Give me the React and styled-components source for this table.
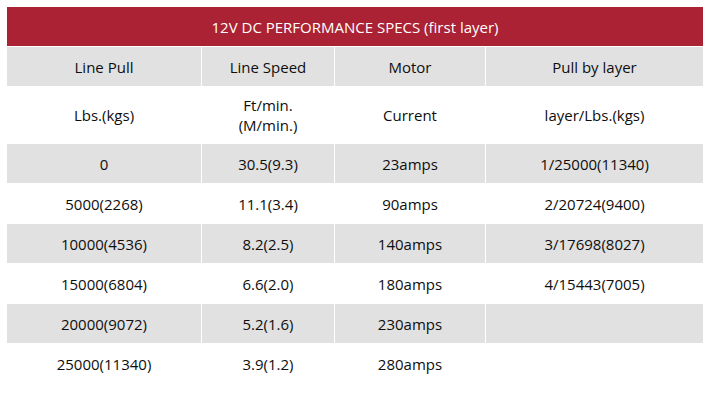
import React from "react";
import styled, { createGlobalStyle } from "styled-components";

const Global = createGlobalStyle`
  html, body { margin: 0; padding: 0; background: #ffffff; }
  body { padding: 7px 9px 0 7px; }
`;

const Table = styled.table`
  width: 696px;
  border-collapse: separate;
  border-spacing: 0;
  table-layout: fixed;
  font-family: "Open Sans", "Noto Sans", sans-serif;
  font-size: 15px;
  color: #0e0e0e;
`;

const TitleCell = styled.th`
  height: 39px;
  padding: 0;
  background: #aa2233;
  color: #ffffff;
  font-weight: 400;
  font-size: 15px;
  text-align: center;
  border-bottom: 1px solid #ffffff;
`;

const Row = styled.tr`
  background: ${(p) => (p.$shade ? "#e1e1e1" : "#ffffff")};
`;

const Cell = styled.td`
  height: ${(p) => p.$h || 39}px;
  padding: 0;
  text-align: center;
  vertical-align: middle;
  line-height: 20px;
  border-bottom: 1px solid #ffffff;
  border-right: ${(p) => (p.$last ? "none" : "1px solid #ffffff")};
`;

const rows = [
  ["0", "30.5(9.3)", "23amps", "1/25000(11340)"],
  ["5000(2268)", "11.1(3.4)", "90amps", "2/20724(9400)"],
  ["10000(4536)", "8.2(2.5)", "140amps", "3/17698(8027)"],
  ["15000(6804)", "6.6(2.0)", "180amps", "4/15443(7005)"],
  ["20000(9072)", "5.2(1.6)", "230amps", ""],
  ["25000(11340)", "3.9(1.2)", "280amps", ""],
];

export default function App() {
  return (
    <>
      <Global />
      <Table>
        <colgroup>
          <col style={{ width: 195 }} />
          <col style={{ width: 133 }} />
          <col style={{ width: 151 }} />
          <col style={{ width: 217 }} />
        </colgroup>
        <thead>
          <tr>
            <TitleCell colSpan={4}>12V DC PERFORMANCE SPECS (first layer)</TitleCell>
          </tr>
        </thead>
        <tbody>
          <Row $shade>
            <Cell>Line Pull</Cell>
            <Cell>Line Speed</Cell>
            <Cell>Motor</Cell>
            <Cell $last>Pull by layer</Cell>
          </Row>
          <Row>
            <Cell $h={56}>Lbs.(kgs)</Cell>
            <Cell $h={56}>
              Ft/min.
              <br />
              (M/min.)
            </Cell>
            <Cell $h={56}>Current</Cell>
            <Cell $h={56} $last>
              layer/Lbs.(kgs)
            </Cell>
          </Row>
          {rows.map((r, i) => (
            <Row key={i} $shade={i % 2 === 0}>
              {r.map((c, j) => (
                <Cell key={j} $last={j === 3}>
                  {c}
                </Cell>
              ))}
            </Row>
          ))}
        </tbody>
      </Table>
    </>
  );
}
